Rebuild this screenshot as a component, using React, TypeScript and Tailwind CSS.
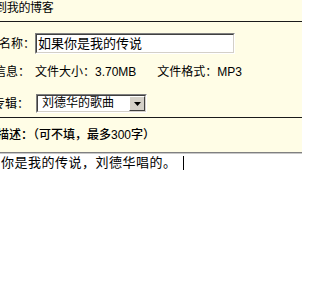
const font = "font-['Liberation_Sans','Noto_Sans_CJK_SC',sans-serif]";

function Inset({ className, children }: { className?: string; children?: React.ReactNode }) {
  return (
    <div className={`border border-t-[#808080] border-l-[#808080] border-b-white border-r-white ${className ?? ""}`}>
      <div className="h-full border border-t-[#404040] border-l-[#404040] border-b-[#d4d0c8] border-r-[#d4d0c8] bg-white">
        {children}
      </div>
    </div>
  );
}

export default function App() {
  return (
    <div className={`w-[302px] h-[290px] overflow-hidden bg-[#fffde6] text-black text-[12px] leading-[16px] ${font}`}>
      {/* title */}
      <div className="h-[22px] border-b border-[#1a1a1a] -ml-[5px] tracking-[-0.3px]">到我的博客</div>

      {/* form */}
      <div className="h-[96px] border-b border-[#1a1a1a] pt-[11px]">
        <div className="flex items-center h-[21px]">
          <span className="w-[36px] -ml-[1px] whitespace-nowrap">名称：</span>
          <Inset className="w-[200px] h-[21px]">
            <div className="pl-[1px] text-[13px] leading-[17px]">如果你是我的传说</div>
          </Inset>
        </div>

        <div className="flex items-center h-[16px] mt-[10px]">
          <span className="w-[35px] -ml-[6px] whitespace-nowrap">信息：</span>
          <span className="ml-[6px]">文件大小：3.70MB</span>
          <span className="ml-[21px]">文件格式：MP3</span>
        </div>

        <div className="flex items-center h-[19px] mt-[14px]">
          <span className="w-[36px] -ml-[7px] whitespace-nowrap">专辑：</span>
          <Inset className="ml-[7px] w-[111px] h-[19px]">
            <div className="flex h-full items-center">
              <span className="flex-1 pl-[4px] leading-[15px]">刘德华的歌曲</span>
              <span className="h-full w-[16px] flex items-center justify-center bg-[#d4d0c8] border border-t-white border-l-white border-b-[#404040] border-r-[#404040]">
                <svg width="7" height="4" viewBox="0 0 7 4">
                  <path d="M0 0h7L3.5 4z" fill="#000" />
                </svg>
              </span>
            </div>
          </Inset>
        </div>
      </div>

      {/* description label */}
      <div className="h-[34px] flex items-center -ml-[3px] whitespace-nowrap font-medium">描述：（可不填，最多300字）</div>

      {/* textarea */}
      <div className="h-[140px] bg-white border-t border-[#808080]">
        <div className="border-t border-[#c8c8c8] pt-[1px] pl-[1px] text-[13px] tracking-[0.5px] leading-[16px] flex items-center">
          <span>你是我的传说，刘德华唱的。</span>
          <span className="ml-[6px] w-px h-[14px] bg-black" />
        </div>
      </div>
    </div>
  );
}
